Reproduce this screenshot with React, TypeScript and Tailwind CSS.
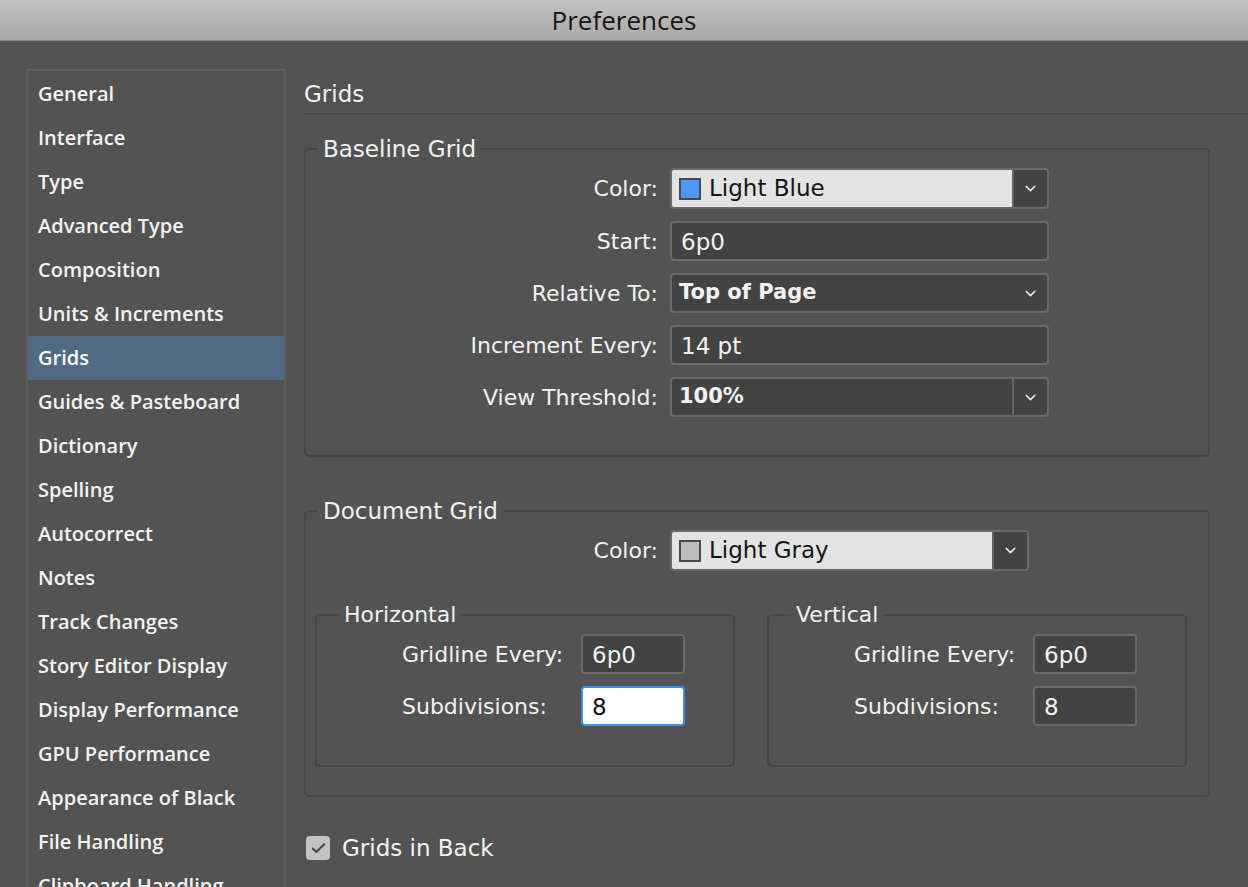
import { Check, ChevronDown } from 'lucide-react'

const SECTIONS = [
  'General',
  'Interface',
  'Type',
  'Advanced Type',
  'Composition',
  'Units & Increments',
  'Grids',
  'Guides & Pasteboard',
  'Dictionary',
  'Spelling',
  'Autocorrect',
  'Notes',
  'Track Changes',
  'Story Editor Display',
  'Display Performance',
  'GPU Performance',
  'Appearance of Black',
  'File Handling',
  'Clipboard Handling',
]

const SIDEBAR_FONT = { fontFamily: '"Open Sans", "DejaVu Sans", sans-serif' }
const PANE_FONT = { fontFamily: '"DejaVu Sans", "Open Sans", sans-serif' }

function Chevron() {
  return <ChevronDown size={17} strokeWidth={2} className="text-[#e8e8e8]" />
}

function TextField({ value, width = 'w-[379px]', focused = false }: { value: string; width?: string; focused?: boolean }) {
  return (
    <div
      className={
        focused
          ? `flex h-[40px] ${width} items-center rounded-[4px] border-2 border-[#3d8fe6] bg-white px-[9px] pt-[2px] text-[23px] text-[#111]`
          : `flex h-[40px] ${width} items-center rounded-[4px] border-2 border-[#6a6a6a] bg-[#434343] px-[9px] pt-[2px] text-[23px] text-[#f2f2f2]`
      }
    >
      {value}
    </div>
  )
}

function ColorSelect({ swatch, name, width }: { swatch: string; name: string; width: string }) {
  return (
    <div className={`flex h-[41px] ${width} overflow-hidden rounded-[4px] border-2 border-[#6a6a6a]`}>
      <div className="flex flex-1 items-center gap-[8px] bg-[#e3e3e3] pl-[7px] text-[23px] text-[#151515]">
        <span className={`h-[22px] w-[22px] border-2 border-[#4a4a4a] ${swatch}`} />
        {name}
      </div>
      <div className="flex w-[35px] items-center justify-center border-l-2 border-[#666] bg-[#434343]">
        <Chevron />
      </div>
    </div>
  )
}

function Row({ label, children }: { label: string; children: React.ReactNode }) {
  return (
    <div className="flex items-center">
      <span className="w-[364px] pr-[12px] text-right text-[22px] text-[#f2f2f2]">{label}</span>
      {children}
    </div>
  )
}

function SubGroup({ title }: { title: string }) {
  return (
    <fieldset className="h-[166px] w-[420px] rounded-[5px] border-2 border-[#474747] pt-[5px]">
      <legend className="ml-[22px] px-[5px] text-[22px] leading-[28px] text-[#f2f2f2]">{title}</legend>
      <div className="flex flex-col gap-[12px] pl-[85px]">
        <div className="flex items-center">
          <span className="w-[179px] text-[22px] text-[#f2f2f2]">Gridline Every:</span>
          <TextField value="6p0" width="w-[104px]" />
        </div>
        <div className="flex items-center">
          <span className="w-[179px] text-[22px] text-[#f2f2f2]">Subdivisions:</span>
          <TextField value="8" width="w-[104px]" focused={title === 'Horizontal'} />
        </div>
      </div>
    </fieldset>
  )
}

export default function App() {
  return (
    <div className="flex h-[887px] w-[1248px] flex-col overflow-hidden bg-[#535353]" style={SIDEBAR_FONT}>
      <div className="flex h-[41px] shrink-0 items-center justify-center border-b border-[#8a8a8a] bg-gradient-to-b from-[#c3c2c3] to-[#a9a8a9] text-[26px] text-[#161616]">
        Preferences
      </div>

      <div className="flex min-h-0 flex-1">
        {/* Category list */}
        <div className="ml-[26px] mt-[28px] w-[260px] shrink-0 border-2 border-b-0 border-[#5e5e5e] pt-[1px]">
          {SECTIONS.map((s) => (
            <div
              key={s}
              className={
                s === 'Grids'
                  ? 'flex h-[44px] items-center bg-[#506a84] pl-[10px] text-[20px] font-semibold text-white'
                  : 'flex h-[44px] items-center pl-[10px] text-[20px] font-semibold text-[#f2f2f2]'
              }
            >
              {s}
            </div>
          ))}
        </div>

        {/* Settings pane */}
        <div className="ml-[18px] flex flex-1 flex-col" style={PANE_FONT}>
          <div className="mt-[39px] border-b-2 border-[#484848] pb-[5px] text-[23px] leading-[28px] text-[#f2f2f2]">Grids</div>

          <fieldset className="mt-[20px] w-[906px] rounded-[5px] border-2 border-[#474747] pb-[38px] pt-[5px]">
            <legend className="ml-[12px] px-[5px] text-[23px] leading-[28px] text-[#f2f2f2]">Baseline Grid</legend>
            <div className="flex flex-col gap-[12px]">
              <Row label="Color:">
                <ColorSelect swatch="bg-[#4e97fd]" name="Light Blue" width="w-[379px]" />
              </Row>
              <Row label="Start:">
                <TextField value="6p0" />
              </Row>
              <Row label="Relative To:">
                <div className="flex h-[40px] w-[379px] items-center justify-between rounded-[4px] border-2 border-[#6a6a6a] bg-[#434343] pl-[7px] pr-[8px] text-[21px] font-bold text-[#f2f2f2]">
                  Top of Page
                  <Chevron />
                </div>
              </Row>
              <Row label="Increment Every:">
                <TextField value="14 pt" />
              </Row>
              <Row label="View Threshold:">
                <div className="flex h-[40px] w-[379px] overflow-hidden rounded-[4px] border-2 border-[#6a6a6a] bg-[#434343] text-[21px] font-bold text-[#f2f2f2]">
                  <div className="flex flex-1 items-center pl-[7px]">100%</div>
                  <div className="flex w-[35px] items-center justify-center border-l-2 border-[#666]">
                    <Chevron />
                  </div>
                </div>
              </Row>
            </div>
          </fieldset>

          <fieldset className="mt-[40px] w-[906px] rounded-[5px] border-2 border-[#474747] pb-[28px] pt-[5px]">
            <legend className="ml-[12px] px-[5px] text-[23px] leading-[28px] text-[#f2f2f2]">Document Grid</legend>
            <Row label="Color:">
              <ColorSelect swatch="bg-[#bdbdbd]" name="Light Gray" width="w-[359px]" />
            </Row>
            <div className="mt-[30px] flex gap-[32px] pl-[9px]">
              <SubGroup title="Horizontal" />
              <SubGroup title="Vertical" />
            </div>
          </fieldset>

          <label className="mt-[34px] flex items-center gap-[12px] pl-[2px]">
            <span className="flex h-[24px] w-[24px] items-center justify-center rounded-[4px] bg-[#c4c4c4]">
              <Check size={17} strokeWidth={3} className="text-[#4a4a4a]" />
            </span>
            <span className="text-[23px] text-[#f2f2f2]">Grids in Back</span>
          </label>
        </div>
      </div>
    </div>
  )
}
